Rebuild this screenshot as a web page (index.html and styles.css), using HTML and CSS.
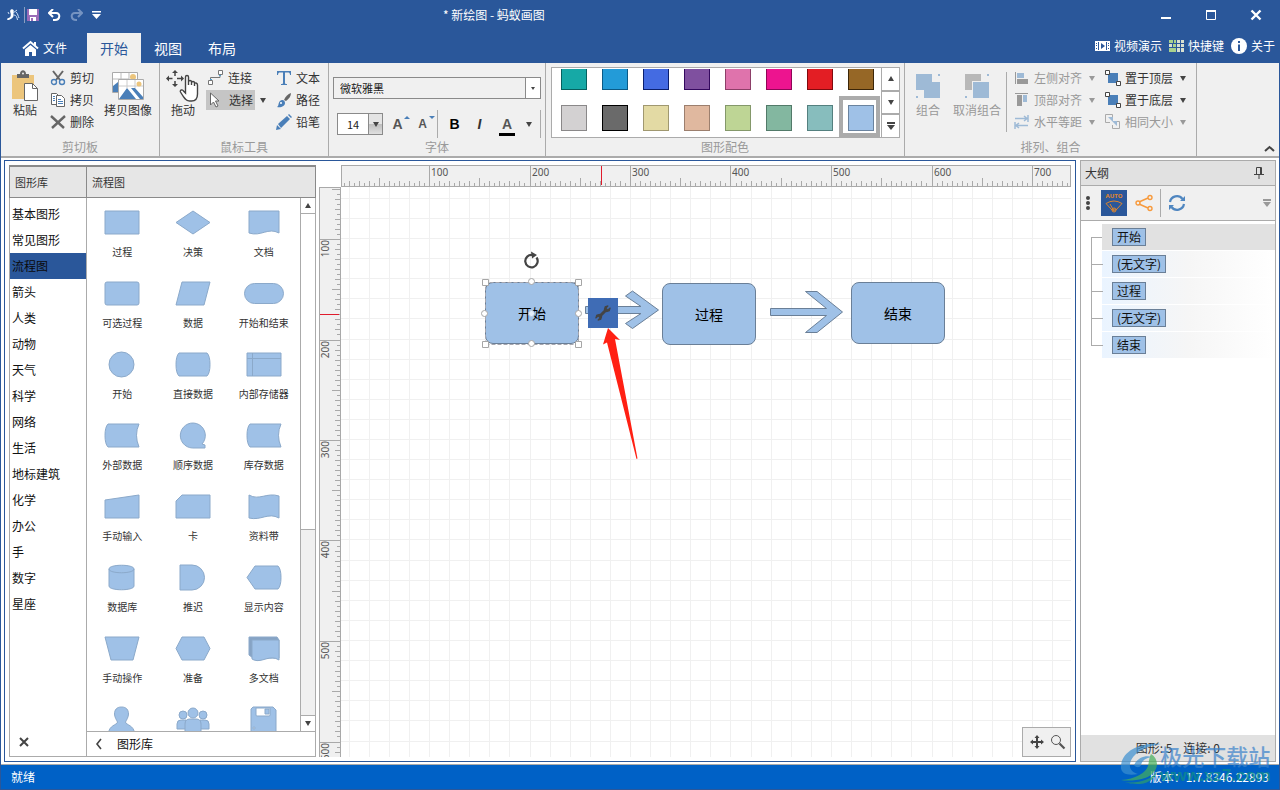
FILE: index.html
```html
<!DOCTYPE html>
<html lang="zh-CN">
<head>
<meta charset="utf-8">
<title>新绘图 - 蚂蚁画图</title>
<link rel="stylesheet" href="styles.css">
</head>
<body>
<div class="window">
  <header class="titlebar">
    <div class="quick">
      <svg class="app-logo" width="14" height="14" viewBox="0 0 14 14"><path d="M5 1.500c2-1 3.500 1 2.500 2.500C7 5 8 6 7.500 8 7 10 4 12 1.500 12c-1-1 0-2 1-2C5 9.500 5 7 4.500 5 4 3.500 4 2 5 1.500z" fill="#fff"/><path d="M7 5l4-3M8 7c2 0 3 2 3.500 5M10 4c2 2 2 4 3 6M3 6L2 4" fill="none" stroke="#cfe0f5"/></svg>
      <i class="quick-sep"></i>
      <button aria-label="保存"><svg width="12" height="12" viewBox="0 0 12 12"><path d="M0 0h12v12H0z" fill="#9a6bb8"/><path d="M2 0h8v6H2zM3 8h6v4H3z" fill="#fff"/><path d="M4 9h2v3H4z" fill="#9a6bb8"/></svg></button>
      <button aria-label="撤销"><svg width="13" height="12" viewBox="0 0 13 12" fill="none" stroke="#fff" stroke-width="2"><path d="M2 4h6c5 0 4 7-1 7H5M5 0L1 4l4 4"/></svg></button>
      <button aria-label="重做"><svg width="13" height="12" viewBox="0 0 13 12" fill="none" stroke="#7593c1" stroke-width="2"><path d="M11 4H5c-5 0-4 7 1 7h1M8 0l4 4-4 4"/></svg></button>
      <button aria-label="自定义"><svg width="9" height="9" viewBox="0 0 9 9" fill="#fff"><path d="M0 0h9v1.500H0zM0 3h9L4.500 8z"/></svg></button>
    </div>
    <h1>* 新绘图 - 蚂蚁画图</h1>
    <div class="winbtns">
      <button aria-label="最小化"><svg width="12" height="12"><path d="M1 8h10v2H1z" fill="#fff"/></svg></button>
      <button aria-label="最大化"><svg width="12" height="12"><path d="M1.500 2h9v8.500h-9z" fill="none" stroke="#fff"/><path d="M1 1h10v2H1z" fill="#fff"/></svg></button>
      <button aria-label="关闭"><svg width="12" height="12"><path d="M1.500 1.500l9 9M10.500 1.500l-9 9" stroke="#fff" stroke-width="2.400"/></svg></button>
    </div>
  </header>

  <nav class="tabs">
    <button class="file"><svg width="17" height="16" viewBox="0 0 17 16"><path d="M1 8.500L8.500 2 16 8.500M13 2v4" fill="none" stroke="#fff" stroke-width="2"/><path d="M3 9.500L8.500 5l5.500 4.500V16h-4v-4H7v4H3z" fill="#fff"/></svg>文件</button>
    <button class="tab on">开始</button>
    <button class="tab">视图</button>
    <button class="tab">布局</button>
    <div class="help">
      <a href="#"><svg width="15" height="12" viewBox="0 0 15 12"><path d="M0 1h15v10H0z" fill="#fff"/><path d="M3 2h1v8H3zM11 2h1v8h-1zM1 3h1v1H1zM1 5h1v1H1zM1 8h1v1H1zM13 3h1v1h-1zM13 5h1v1h-1zM13 8h1v1h-1zM6 3l4 3-4 3z" fill="#2a579a"/></svg>视频演示</a>
      <a href="#"><svg width="15" height="12" viewBox="0 0 15 12"><path d="M0 0h4v3H0zM5 0h2v3H5zM0 8h7v4H0zM4 4h3v3H4z" fill="#a9d18e"/><path d="M8 0h3v3H8zM12 0h3v3h-3zM0 4h3v3H0zM8 4h3v3H8zM12 4h3v3h-3zM8 8h3v4H8zM12 8h3v4h-3z" fill="#d8e0d0"/></svg>快捷键</a>
      <a href="#"><svg width="16" height="16" viewBox="0 0 16 16"><circle cx="8" cy="8" r="8" fill="#fff"/><path d="M7 3h2v2H7zM7 6.500h2V13H7z" fill="#2a579a"/></svg>关于</a>
    </div>
  </nav>

  <section class="ribbon">
    <div class="group g-clip">
      <div class="group-body">
        <button class="big"><svg width="28" height="32" viewBox="0 0 28 32"><path d="M1 5h22v24H1z" fill="#ecc57c"/><path d="M6 8V4h3c0-5 6-5 6 0h3v4z" fill="#666"/><circle cx="12" cy="3.500" r="1" fill="#f0f0f0"/><path d="M13.500 13.500h8l5 5v12h-13z" fill="#fff" stroke="#666"/><path d="M21.500 13.500v5h5" fill="none" stroke="#666"/></svg>粘贴</button>
        <div class="col">
          <button class="row"><svg width="16" height="16" viewBox="0 0 16 16" fill="none"><path d="M3 1l7 9M13 1L6 10" stroke="#666" stroke-width="2"/><circle cx="4" cy="12" r="2.500" stroke="#4a7fb8" stroke-width="1.400"/><circle cx="12" cy="12" r="2.500" stroke="#4a7fb8" stroke-width="1.400"/></svg>剪切</button>
          <button class="row"><svg width="16" height="16" viewBox="0 0 16 16" fill="#fff" stroke="#666"><path d="M1.500 1.500h5l3 3v8h-8z"/><path d="M6.500 3.500h5l3 3v8h-8z"/><path d="M3 4.500h2M3 6.500h2M3 8.500h2M8 7.500h3M8 9.500h5M8 11.500h5" stroke="#4a7fb8"/></svg>拷贝</button>
          <button class="row"><svg width="16" height="16" viewBox="0 0 16 16"><path d="M1 2l13 12M15 2L2 14" stroke="#666" stroke-width="2.400"/></svg>删除</button>
        </div>
        <button class="big w-copy"><svg width="34" height="32" viewBox="0 0 34 32"><path d="M1.500 2.500h25v20h-25z" fill="#fff" stroke="#aaa"/><path d="M10 3v10M18 3v6M2 9h16" stroke="#bbb"/><circle cx="22" cy="7" r="3" fill="#ecc57c"/><path d="M2 22v-6l5-4v10z" fill="#4a7fb8"/><path d="M7.500 9.500h25v20h-25z" fill="#fff" stroke="#aaa"/><path d="M16 10v8M24 10v8M8 16h24" stroke="#ccc"/><circle cx="28" cy="14" r="2.500" fill="#ecc57c"/><path d="M8 29l8-11 9 11zM20 18h4l8 9v2h-3z" fill="#4a7fb8"/></svg>拷贝图像</button>
      </div>
      <div class="group-name">剪切板</div>
    </div>

    <div class="group g-mouse">
      <div class="group-body">
        <button class="big"><svg width="34" height="32" viewBox="0 0 34 32" fill="none" stroke="#444"><path d="M9 2v4M9 11v4M2.500 8.500h4M11 8.500h4" stroke-width="1.500"/><path d="M9 0l3 3H6zM9 17l3-3H6zM0 8.500l3-3v6zM18 8.500l-3-3v6z" fill="#444" stroke="none"/><path d="M19.500 19V7c0-2 3-2 3 0v8-3c0-2 3-2 3 0v3-2c0-2 3-2 3 0v3-2c0-2 3-1 3 1v9c0 4-2 7-6 7h-2c-4 0-6-4-9-9-1-2 2-3 3-1l2 2z" fill="#fff" stroke-width="1.400"/></svg>拖动</button>
        <div class="col">
          <button class="row"><svg width="16" height="16" viewBox="0 0 16 16" fill="none"><path d="M2.500 10V7.500H12V5" stroke="#777"/><path d="M.5 10.500h4v4h-4zM10.500.5h4v4h-4z" fill="#fff" stroke="#777"/><path d="M2 9h2v1H2zM11 5h2v1h-2z" fill="#4a9fd0"/></svg>连接</button>
          <div class="split"><button class="row pressed"><svg width="16" height="16" viewBox="0 0 16 16"><path d="M3.500 1v12l3-3 2.500 5 2-1-2.500-5H12z" fill="#fff" stroke="#666"/></svg>选择</button><button class="caret-btn" aria-label="选择方式"><i class="caret"></i></button></div>
        </div>
        <div class="col">
          <button class="row"><svg width="16" height="16" viewBox="0 0 16 16" fill="#4a7fb8"><path d="M1 1h14v4h-1c0-2-1-2.500-2-2.500H9V13c0 1 1 1 2 1v1H5v-1c1 0 2 0 2-1V2.500H4C3 2.500 2 3 2 5H1z"/></svg>文本</button>
          <button class="row"><svg width="16" height="16" viewBox="0 0 16 16"><path d="M15 1c-3 1-6 4-7 7l2 1c3-2 5-5 5-8z" fill="#666"/><path d="M1 15c2-1 1-4 3-6s5-1 5 2c0 3-4 5-8 4z" fill="#4a7fb8"/><circle cx="5" cy="11" r="1" fill="#fff"/></svg>路径</button>
          <button class="row"><svg width="16" height="16" viewBox="0 0 16 16"><path d="M0 16l1-5 4 4zM2 10l9-8 3 3-9 9zM12 1l1-1 3 3-1 1z" fill="#4a7fb8"/></svg>铅笔</button>
        </div>
      </div>
      <div class="group-name">鼠标工具</div>
    </div>

    <div class="group g-font">
      <div class="group-body">
        <div class="combo family"><select aria-label="字体"><option>微软雅黑</option></select><span class="combo-arrow"><i class="caret tiny"></i></span></div>
        <div class="font-row">
          <div class="combo size"><select aria-label="字号"><option>14</option></select><span class="combo-arrow"><i class="caret"></i></span></div>
          <button class="ic up" aria-label="增大字号">A<i></i></button>
          <button class="ic down" aria-label="减小字号">A<i></i></button>
          <i class="vsep"></i>
          <button class="ic bold">B</button>
          <button class="ic italic">I</button>
          <button class="ic color">A</button>
          <button class="caret-btn" aria-label="字体颜色"><i class="caret"></i></button>
          <i class="vsep"></i>
        </div>
      </div>
      <div class="group-name">字体</div>
    </div>

    <div class="group g-color">
      <div class="group-body">
        <div class="gallery">
          <button class="sw c1" aria-label="青绿"></button><button class="sw c2" aria-label="天蓝"></button><button class="sw c3" aria-label="蓝"></button><button class="sw c4" aria-label="紫"></button><button class="sw c5" aria-label="粉"></button><button class="sw c6" aria-label="洋红"></button><button class="sw c7" aria-label="红"></button><button class="sw c8" aria-label="棕"></button>
          <button class="sw d1" aria-label="浅灰"></button><button class="sw d2" aria-label="深灰"></button><button class="sw d3" aria-label="米黄"></button><button class="sw d4" aria-label="肤色"></button><button class="sw d5" aria-label="浅绿"></button><button class="sw d6" aria-label="墨绿"></button><button class="sw d7" aria-label="灰青"></button><button class="sw d8 chosen" aria-label="浅蓝"></button>
        </div>
        <div class="gallery-nav">
          <button aria-label="上一行"><i class="caret rise"></i></button>
          <button aria-label="下一行"><i class="caret"></i></button>
          <button aria-label="全部配色"><i class="caret bar"></i></button>
        </div>
      </div>
      <div class="group-name">图形配色</div>
    </div>

    <div class="group g-arrange">
      <div class="group-body">
        <button class="big off"><svg width="26" height="32" viewBox="0 0 26 32" fill="#9ebad6"><path d="M1 4h16v8h8v16H9v-8H1zM23 4h2v2h-2zM1 26h2v2H1z"/></svg>组合</button>
        <button class="big off w-copy"><svg width="26" height="32" viewBox="0 0 26 32" fill="#9ebad6"><path d="M1 4h16v7H8v9H1z" fill="#b8b8b8"/><path d="M9 12h16v16H9zM23 4h2v2h-2zM1 26h2v2H1z"/></svg>取消组合</button>
        <i class="vsep tall"></i>
        <div class="col">
          <button class="row off"><svg width="16" height="16" viewBox="0 0 16 16"><path d="M1 2h1v12H1zM3 9h11v5H3z" fill="#999"/><path d="M3 3h7v5H3z" fill="#9ebad6"/></svg>左侧对齐<i class="caret"></i></button>
          <button class="row off"><svg width="16" height="16" viewBox="0 0 16 16"><path d="M1 1h13v1H1zM3 3h5v11H3z" fill="#999"/><path d="M9 3h4v7H9z" fill="#9ebad6"/></svg>顶部对齐<i class="caret"></i></button>
          <button class="row off"><svg width="16" height="16" viewBox="0 0 16 16" fill="none" stroke="#9ebad6" stroke-width="1.500"><path d="M1 4.500h12M10 2l3 2.500L10 7M14 1v7M14 11.500H2M5 9l-3 2.500L5 14M1 8v7"/></svg>水平等距<i class="caret"></i></button>
        </div>
        <div class="col second">
          <button class="row"><svg width="16" height="16" viewBox="0 0 16 16"><path d="M3 3h10v10H3z" fill="#4a7fb8"/><path d="M.5.5h4v4h-4zM11.500 11.500h4v4h-4z" fill="#fff" stroke="#444"/></svg>置于顶层<i class="caret"></i></button>
          <button class="row"><svg width="16" height="16" viewBox="0 0 16 16"><path d="M3 3h10v10H3z" fill="#4a7fb8"/><path d="M.5.5h4v4h-4zM11.500 11.500h4v4h-4z" fill="#fff" stroke="#444"/></svg>置于底层<i class="caret"></i></button>
          <button class="row off"><svg width="16" height="16" viewBox="0 0 16 16"><path d="M5 8.500H.5v-8h7V5M9 7.500h5.500v7h-7V11" fill="none" stroke="#aaa"/><path d="M3 3h5v5zM7 7h5v5z" fill="#9ebad6"/></svg>相同大小<i class="caret"></i></button>
        </div>
      </div>
      <div class="group-name">排列、组合</div>
    </div>
    <button class="fold" aria-label="折叠功能区"><svg width="11" height="7" viewBox="0 0 11 7"><path d="M1 6l4.500-4L10 6" fill="none" stroke="#444" stroke-width="2"/></svg></button>
  </section>

  <main class="work">
    <section class="document">
      <aside class="library">
        <div class="lib-head"><span>图形库</span><span>流程图</span></div>
        <div class="lib-main">
          <div class="cats">
            <ul>
              <li><button>基本图形</button></li><li><button>常见图形</button></li><li><button class="on">流程图</button></li><li><button>箭头</button></li><li><button>人类</button></li><li><button>动物</button></li><li><button>天气</button></li><li><button>科学</button></li><li><button>网络</button></li><li><button>生活</button></li><li><button>地标建筑</button></li><li><button>化学</button></li><li><button>办公</button></li><li><button>手</button></li><li><button>数字</button></li><li><button>星座</button></li>
            </ul>
            <button class="lib-close" aria-label="关闭图形库"><svg width="12" height="12"><path d="M2 2l8 8M10 2l-8 8" stroke="#444" stroke-width="2"/></svg></button>
          </div>
          <div class="shapes">
            <div class="shape-scroll">
              <div class="shape-grid">
                <figure><svg viewBox="0 0 40 40"><path d="M3 8h34v23H3z"/></svg><figcaption>过程</figcaption></figure>
                <figure><svg viewBox="0 0 40 40"><path d="M20 8l17 11.500L20 31 3 19.500z"/></svg><figcaption>决策</figcaption></figure>
                <figure><svg viewBox="0 0 40 40"><path d="M5 8h30v22c-11-6-18 4-30 0z"/></svg><figcaption>文档</figcaption></figure>
                <figure><svg viewBox="0 0 40 40"><rect x="3" y="8" width="34" height="23" rx="2"/></svg><figcaption>可选过程</figcaption></figure>
                <figure><svg viewBox="0 0 40 40"><path d="M9 8h28l-6 23H3z"/></svg><figcaption>数据</figcaption></figure>
                <figure><svg viewBox="0 0 40 40"><rect x=".5" y="9.500" width="39" height="20" rx="10"/></svg><figcaption>开始和结束</figcaption></figure>
                <figure><svg viewBox="0 0 40 40"><circle cx="19.500" cy="19.500" r="12.500"/></svg><figcaption>开始</figcaption></figure>
                <figure><svg viewBox="0 0 40 40"><path d="M6 8h28q3 3 3 11.500T34 31H6q-3-3-3-11.500T6 8z"/></svg><figcaption>直接数据</figcaption></figure>
                <figure><svg viewBox="0 0 40 40"><path d="M3 8h34v23H3zM8.500 8v23M3 13.500h34"/></svg><figcaption>内部存储器</figcaption></figure>
                <figure><svg viewBox="0 0 40 40"><path d="M6 8h31q-5 11 0 23H6q-3-3-3-11.500T6 8z"/></svg><figcaption>外部数据</figcaption></figure>
                <figure><svg viewBox="0 0 40 40"><path d="M32 32H19.500A12.500 12.500 0 1 1 29 28l3 1z"/></svg><figcaption>顺序数据</figcaption></figure>
                <figure><svg viewBox="0 0 40 40"><path d="M6 8h31q-5 11 0 23H6q-3-3-3-11.500T6 8z"/></svg><figcaption>库存数据</figcaption></figure>
                <figure><svg viewBox="0 0 40 40"><path d="M3 13l34-5v23H3z"/></svg><figcaption>手动输入</figcaption></figure>
                <figure><svg viewBox="0 0 40 40"><path d="M9 8h28v23H3V14z"/></svg><figcaption>卡</figcaption></figure>
                <figure><svg viewBox="0 0 40 40"><path d="M5 8c10 6 18-3 30 1v22c-11-6-18 3-30 0z"/></svg><figcaption>资料带</figcaption></figure>
                <figure><svg viewBox="0 0 40 40"><path d="M7 11v17c0 5 25 5 25 0V11c0-5-25-5-25 0c0 5 25 5 25 0"/></svg><figcaption>数据库</figcaption></figure>
                <figure><svg viewBox="0 0 40 40"><path d="M7 7h12a12.500 12.500 0 0 1 0 25H7z"/></svg><figcaption>推迟</figcaption></figure>
                <figure><svg viewBox="0 0 40 40"><path d="M11 8h23q3 3 3 11.500T34 31H11L3 19.500z"/></svg><figcaption>显示内容</figcaption></figure>
                <figure><svg viewBox="0 0 40 40"><path d="M3 8h34l-6 23H9z"/></svg><figcaption>手动操作</figcaption></figure>
                <figure><svg viewBox="0 0 40 40"><path d="M9 8h22l6 11.500L31 31H9L3 19.500z"/></svg><figcaption>准备</figcaption></figure>
                <figure><svg viewBox="0 0 40 40"><path class="dim" d="M5 8h28l2 3v18H9l-4-3z"/><path d="M8 11h27v20c-9-6-17 3-25 0l-2-1z"/></svg><figcaption>多文档</figcaption></figure>
                <figure><svg viewBox="0 0 40 40"><path d="M19.500 7c5 0 7 3 7 7 0 3-2 6-3 8 0 3 9 3 9 12h-26c0-9 9-9 9-12-1-2-3-5-3-8 0-4 2-7 7-7z"/></svg></figure>
                <figure><svg viewBox="0 0 40 40"><circle cx="10" cy="15" r="4"/><circle cx="30" cy="15" r="4"/><path d="M4 29v-5q0-4 4-4h5v9zM27 29v-9h5q4 0 4 4v5z"/><path d="M12 34V24q0-5 5-5h6q5 0 5 5v10z"/><circle cx="20" cy="13" r="5"/></svg></figure>
                <figure><svg viewBox="0 0 40 40"><path d="M9 7h20l3 3v24H7V9z"/><path class="paper" d="M12 8h14v7q0 1-1 1H13q-1 0-1-1z"/><path d="M21 9h4v5h-4z"/><circle class="paper" cx="10" cy="28" r="1"/></svg></figure>
              </div>
              <div class="scrollbar">
                <button aria-label="向上滚动"><i class="caret rise"></i></button>
                <div class="track"><div class="thumb"></div></div>
                <button aria-label="向下滚动"><i class="caret"></i></button>
              </div>
            </div>
            <div class="lib-foot"><button><svg width="8" height="12" viewBox="0 0 8 12"><path d="M6 1L2 6l4 5" fill="none" stroke="#444" stroke-width="1.600"/></svg>图形库</button></div>
          </div>
        </div>
      </aside>

      <div class="editor">
        <svg class="ruler-h" id="ruler-h"></svg>
        <svg class="ruler-v" id="ruler-v"></svg>
        <div class="canvas">
          <svg class="layer" id="grid"></svg>
          <div class="node n1">开始</div>
          <div class="node n2">过程</div>
          <div class="node n3">结束</div>
          <svg class="layer" viewBox="341 187 730 570" width="730" height="570">
            <g fill="#9fc1e7" stroke="#6a7f97">
              <path d="M585.500 306.500H641L625.500 296l7-5 26 19-26 18.500-7-5 15.500-10h-55.500z"/>
              <path d="M770.500 308.500h56l-21-17H817l25.500 20.500-25.500 20.500h-11.500l21-17h-56z"/>
            </g>
            <path d="M485.500 344.500h93v-62h-93z" fill="none" stroke="#a6a6ae" stroke-dasharray="4 2"/>
            <g fill="#fff" stroke="#a6a6a6">
              <path d="M482.500 279.500h6v6h-6zM575.500 279.500h6v6h-6zM482.500 341.500h6v6h-6zM575.500 341.500h6v6h-6z"/>
              <circle cx="531.500" cy="281.500" r="3"/><circle cx="531.500" cy="343.500" r="3"/><circle cx="484.500" cy="313.500" r="3"/><circle cx="578.500" cy="313.500" r="3"/><circle cx="531.500" cy="313.500" r="3" fill="#e4edf8" stroke="#b6c8dc"/>
            </g>
            <path d="M536.500 257.500a6.200 6.200 0 1 1-4-2.500" fill="none" stroke="#444" stroke-width="2.200"/><path d="M531 251.500l6 3.500-5 3.500z" fill="#444"/>
            <path d="M588 298h30v30h-30z" fill="#3f6cb5"/>
            <g transform="translate(603 313) rotate(-45)" fill="#444"><path d="M-5-1.500H5v3H-5z"/><path d="M-9-2l3-1.500 3 1.500v4l-3 1.500L-9 2l0-1 3-.2v-1.600l-3-.2zM9-2L6-3.500 3-2v4l3 1.500L9 2V1L6 .8V-.8L9-1z"/></g>
            <path d="M608 328l12 12-5-1 22.500 119.500-1 .5-29.500-116.500-4 2z" fill="#ff2013"/>
          </svg>
          <div class="zoombox">
            <button aria-label="移动"><svg width="14" height="14" viewBox="0 0 14 14" fill="#444"><path d="M6 2h2v10H6zM2 6h10v2H2z"/><path d="M7 0l2.500 3h-5zM7 14l2.500-3h-5zM0 7l3-2.500v5zM14 7l-3-2.500v5z"/></svg></button>
            <button aria-label="缩放"><svg width="16" height="16" viewBox="0 0 16 16" fill="none" stroke="#555"><circle cx="6" cy="6" r="4.500"/><path d="M9.500 9.500l5 5" stroke-width="2.200"/></svg></button>
          </div>
        </div>
      </div>
    </section>

    <aside class="outline">
      <div class="out-head">大纲<button aria-label="固定"><svg width="10" height="12" viewBox="0 0 10 12"><path d="M2.500 7V.5h5V7M0 7.500h10M5 8v4" fill="none" stroke="#444"/><path d="M6 1h1v6H6z" fill="#444"/></svg></button></div>
      <div class="out-tools">
        <svg width="6" height="16" viewBox="0 0 6 16" fill="#444"><circle cx="3" cy="3" r="2"/><circle cx="3" cy="8" r="2"/><circle cx="3" cy="13" r="2"/></svg>
        <button class="auto" aria-label="自动排版"><span>AUTO</span><svg width="18" height="13" viewBox="0 0 18 13" fill="none" stroke="#e0862c"><path d="M1 3.500Q9-1.500 17 3.500L11 10H7zM9 11L5 4"/><circle cx="9" cy="10" r="2"/></svg></button>
        <button aria-label="连接布局"><svg width="18" height="18" viewBox="0 0 18 18" fill="none" stroke="#f79a3c" stroke-width="1.400"><path d="M4 8l9-4M4 10l9 4"/><circle cx="3" cy="9" r="2"/><circle cx="15" cy="3.500" r="2"/><circle cx="15" cy="14.500" r="2"/></svg></button>
        <i class="vsep"></i>
        <button aria-label="刷新"><svg width="18" height="18" viewBox="0 0 18 18" fill="none" stroke="#4f86c0" stroke-width="2.200"><path d="M2 8a7 7 0 0 1 12.500-3M16 10a7 7 0 0 1-12.500 3"/><path d="M17 2v5h-5zM1 16v-5h5z" fill="#4f86c0" stroke="none"/></svg></button>
        <button class="more" aria-label="更多"><i class="caret bar"></i></button>
      </div>
      <ul class="tree">
        <li class="on"><button>开始</button></li>
        <li><button>(无文字)</button></li>
        <li><button>过程</button></li>
        <li><button>(无文字)</button></li>
        <li><button>结束</button></li>
      </ul>
      <div class="out-foot"><span>图形: 5</span><span>连接: 0</span></div>
    </aside>
  </main>

  <footer class="status"><span>就绪</span><span>版本：1.7.8346.22893</span></footer>

  <div class="brand">
    <svg width="46" height="42" viewBox="0 0 46 42"><path d="M3 24C4 9 22 0 43 2 28 4 14 11 12 22c-1 5 3 9 8 10C10 34 2 32 3 24z" fill="#3b8fd0"/><path d="M16 23c4-8 12-10 18-8-7 1-10 4-11 8-1 3-5 3-7 0z" fill="#3b8fd0"/><path d="M33 12c10 6 7 20-6 24-9 3-19 3-24 2 14-1 25-7 27-14 1-4 1-8 3-12z" fill="#45b05a"/><path d="M6 40c13 2 28-2 33-11-1 6-7 12-17 13-7 0-13-1-16-2z" fill="#2f9f6a"/></svg>
    <div><strong>极光下载站</strong><em>www.xz7.com</em></div>
  </div>
</div>
<script src="rulers.js"></script>
</body>
</html>
```
FILE: styles.css
```css
* { box-sizing: border-box; }
body { margin: 0; font: 12px/16px "Noto Sans CJK SC", "Noto Sans", sans-serif; color: #333; }
button { font: inherit; color: inherit; background: none; border: 0; padding: 0; margin: 0; }
ul { list-style: none; margin: 0; padding: 0; }
svg { display: block; flex: none; }
a { color: inherit; text-decoration: none; }
.window { position: relative; display: flex; flex-direction: column; height: 100vh; background: #2a579a; overflow: hidden; }

.titlebar { display: flex; align-items: center; height: 33px; padding-bottom: 3px; color: #fff; }
.quick { display: flex; align-items: center; gap: 9px; padding-left: 6px; width: 443px; }
.quick-sep { width: 1px; height: 16px; background: #8a9fc2; margin: 0 -7px 0 -5px; }
.titlebar h1 { flex: 1; margin: 0; font-size: 12px; font-weight: 400; }
.winbtns { display: flex; margin-right: 2px; }
.winbtns button { width: 45px; height: 30px; display: grid; place-items: center; }

.tabs { display: flex; height: 30px; padding: 0 5px 0 22px; color: #fff; }
.file { display: flex; align-items: center; gap: 4px; width: 65px; }
.tab { width: 54px; font-size: 14px; }
.tab.on { background: #f0f0f0; color: #2a579a; }
.help { margin-left: auto; display: flex; gap: 7px; align-items: center; padding-bottom: 4px; }
.help a { display: flex; align-items: center; gap: 4px; }

.ribbon { display: flex; margin: 0 1px; background: #f0f0f0; border-bottom: 2px solid #ababab; }
.group { display: flex; flex-direction: column; border-right: 1px solid #ababab; }
.group-body { display: flex; height: 76px; }
.group-name { text-align: center; height: 17px; color: #999; }
.g-clip { width: 159px; }
.g-mouse { width: 169px; }
.g-font { width: 217px; }
.g-color { width: 359px; }
.g-arrange { width: 292px; }
.big { display: flex; flex-direction: column; align-items: center; padding-top: 7px; width: 48px; white-space: nowrap; }
.w-copy { width: 50px; }
.g-clip .w-copy { width: 54px; margin-left: 6px; }
.g-mouse .big { width: 46px; }
.g-arrange .big { width: 46px; }
.g-arrange .w-copy { width: 52px; }
.col { padding-top: 4px; }
.row { display: flex; align-items: center; gap: 4px; height: 22px; padding: 0 1px; white-space: nowrap; }
.g-mouse .row { padding: 0 2px; }
.split { display: flex; align-items: center; height: 22px; }
.g-mouse .pressed { background: #c5c5c5; height: 20px; width: 49px; padding-left: 1px; gap: 6px; }
.g-mouse .col + .col { margin-left: 3px; }
.caret-btn { display: grid; place-items: center; width: 16px; height: 20px; }
.off { color: #999; }
.off .caret { border-top-color: #999; }
.row .caret { margin-left: 3px; }
.g-arrange .row { padding: 0 5px 0 2px; gap: 4px; }
.g-arrange .second { margin-left: 3px; }
.caret { display: block; width: 0; height: 0; border: 3px solid transparent; border-top: 5px solid #444; border-bottom: 0; }
.caret.rise { border-top: 0; border-bottom: 5px solid #444; }
.caret.tiny { border-width: 3px 2px 0; }
.caret.bar { position: relative; border-width: 5px 4px 0; margin-top: 3px; }
.caret.bar::before { content: ""; position: absolute; left: -4px; top: -8px; width: 8px; height: 2px; background: #444; }

.g-font .group-body { flex-direction: column; padding: 14px 4px 0; }
.combo { position: relative; display: flex; height: 22px; border: 1px solid #8a8a8a; }
.combo select { flex: 1; width: 100%; appearance: none; border: 0; background: #f0f0f0; font: 11px/18px "Noto Sans CJK SC", sans-serif; color: #222; padding: 0 6px; }
.combo-arrow { position: absolute; right: 0; top: 0; bottom: 0; width: 15px; display: grid; place-items: center; border-left: 1px solid #8a8a8a; background: #fff; pointer-events: none; }
.font-row { display: flex; align-items: center; height: 30px; margin-top: 10px; padding-left: 4px; }
.size { width: 46px; }
.size select { background: #fff; padding: 0 9px; }
.size .combo-arrow { width: 14px; background: linear-gradient(#e4e4e4 50%, #bdbdbd 50%, #e0e0e0); }
.ic { position: relative; width: 25px; height: 24px; font: 700 14px/24px "Liberation Sans", sans-serif; color: #555; }
.ic.up { margin-left: 4px; }
.ic.down { font-size: 12px; }
.ic.up, .ic.down { padding-right: 4px; }
.ic i { position: absolute; right: 2px; top: 4px; border: 3px solid transparent; border-bottom: 3px solid #4a7fb8; border-top: 0; }
.ic.down i { border-top: 3px solid #4a7fb8; border-bottom: 0; }
.ic.bold { color: #000; margin-left: 4px; }
.ic.italic { font-style: italic; color: #333; }
.ic.color { margin: 0 2px 0 3px; width: 24px; }
.ic.color::after { content: ""; position: absolute; left: 4px; right: 4px; bottom: 0; height: 3px; background: #000; }
.vsep { width: 1px; height: 28px; background: #ababab; }
.font-row .vsep:last-child { margin-left: 3px; }
.vsep.tall { height: 60px; margin: 9px 5px 0 3px; }

.g-color .group-body { padding: 4px 4px 0 5px; }
.gallery { flex: 1; display: grid; grid-template-columns: repeat(8, 41px); grid-auto-rows: 41px; align-content: end; height: 71px; padding-top: 1px; overflow: clip; overflow-clip-margin: content-box; background: #fff; border: 1px solid #ababab; }
.sw { padding: 9px; border: 0 solid #ababab; }
.sw::before { content: ""; display: block; width: 24px; height: 24px; background: var(--fill); border: 1px solid var(--edge); }
.sw.chosen { padding: 5px; border-width: 4px; }
.c1 { --fill: #16a9a6; --edge: #06605e; }
.c2 { --fill: #239bd8; --edge: #0b5a86; }
.c3 { --fill: #446be2; --edge: #0a1f6e; }
.c4 { --fill: #7f509f; --edge: #33085e; }
.c5 { --fill: #df73ac; --edge: #8c3f68; }
.c6 { --fill: #ed148f; --edge: #8f0556; }
.c7 { --fill: #e31e24; --edge: #800a0e; }
.c8 { --fill: #966726; --edge: #3c2608; }
.d1 { --fill: #d3d1d2; --edge: #8a8889; }
.d2 { --fill: #6a6a6a; --edge: #000; }
.d3 { --fill: #e3daa4; --edge: #a09870; }
.d4 { --fill: #e0b89f; --edge: #9c7f6e; }
.d5 { --fill: #bed595; --edge: #84986a; }
.d6 { --fill: #83b7a0; --edge: #527a69; }
.d7 { --fill: #87bdbd; --edge: #54807f; }
.d8 { --fill: #9fc1e7; --edge: #6a839f; }
.gallery-nav { display: flex; flex-direction: column; width: 18px; height: 71px; }
.gallery-nav button { flex: 1; display: grid; place-items: center; background: #fff; border: 1px solid #ababab; border-left-width: 0; }
.fold { align-self: flex-end; margin: 0 4px 4px auto; }

.work { flex: 1; min-height: 0; display: flex; gap: 4px; margin: 0 1px; padding: 2px 3px 2px; background: #fff; border-bottom: 1px solid #ababab; }
.document { flex: 1; min-width: 0; display: flex; gap: 3px; padding: 4px 4px 4px; border: 1px solid #2a579a; }
.library { width: 307px; display: flex; flex-direction: column; border: 1px solid #ababab; }
.lib-head { display: grid; grid-template-columns: 76px 1fr; height: 33px; margin: -1px -1px 0; border: 1px solid #8a8a8a; border-top-width: 2px; background: #e6e6e6; font-size: 11px; line-height: 30px; }
.lib-head span { padding-left: 5px; }
.lib-head span + span { border-left: 1px solid #8a8a8a; padding-left: 5px; }
.lib-main { flex: 1; min-height: 0; display: grid; grid-template-columns: 77px 1fr; }
.cats { display: flex; flex-direction: column; justify-content: space-between; border-right: 1px solid #ababab; padding-top: 3px; color: #111; }
.cats li button { display: block; width: 100%; height: 26px; text-align: left; padding-left: 2px; }
.cats li .on { background: #2a579a; color: #0a0a0a; }
.lib-close { align-self: flex-start; margin: 0 0 8px 8px; }
.shapes { display: flex; flex-direction: column; min-height: 0; }
.shape-scroll { flex: 1; min-height: 0; display: flex; overflow: hidden; }
.shape-grid { flex: 1; display: grid; grid-template-columns: repeat(3, 1fr); grid-auto-rows: 71px; padding: 5px 1px 0 0; }
figure { margin: 0; display: flex; flex-direction: column; align-items: center; font-size: 10px; line-height: 16px; gap: 1px; }
figure svg { width: 40px; height: 40px; fill: #9fc1e7; stroke: #8ba9ca; }
figure .dim { fill: #86a3c4; }
figure .paper { fill: #fff; }
.scrollbar { width: 15px; display: flex; flex-direction: column; background: #f0f0f0; border-left: 1px solid #ababab; }
.scrollbar button { height: 16px; display: grid; place-items: center; background: #fff; border-bottom: 1px solid #ababab; }
.scrollbar button:last-child { border-bottom: 0; border-top: 1px solid #ababab; }
.track { flex: 1; }
.thumb { height: 63%; background: #fff; border-bottom: 1px solid #ababab; }
.lib-foot { display: flex; height: 25px; border-top: 1px solid #ababab; padding-left: 8px; color: #111; }
.lib-foot button { display: flex; align-items: center; gap: 14px; }

.editor { flex: 1; min-width: 0; display: grid; grid-template: 22px 1fr / 22px 1fr; }
.ruler-h { grid-column: 2; width: 100%; height: 22px; background: #f0f0f0; border: 1px solid #a9a9a9; }
.ruler-v { width: 22px; height: 100%; background: #f0f0f0; border: 1px solid #a9a9a9; border-bottom: 0; }
.ruler-h text, .ruler-v text { font: 10px "Noto Sans", sans-serif; fill: #555; }
.tick { fill: #a9a9a9; }
.mark { fill: #e01b2c; }
.canvas { position: relative; overflow: hidden; }
.layer { position: absolute; left: 0; top: 0; }
#grid { width: 100%; height: 100%; fill: #f0f0f0; }
.node { position: absolute; display: grid; place-items: center; width: 94px; height: 62px; background: #9fc1e7; border: 1px solid #6a7f97; border-radius: 8px; color: #000; font-size: 14px; }
.n1 { left: 144px; top: 95px; }
.n2 { left: 321px; top: 96px; }
.n3 { left: 510px; top: 95px; }
.zoombox { position: absolute; right: 0; bottom: 0; display: flex; align-items: center; gap: 6px; height: 30px; padding: 0 4px 0 7px; background: #f0f0f0; border: 1px solid #ababab; }

.outline { width: 196px; display: flex; flex-direction: column; border: 1px solid #ababab; }
.out-head { display: flex; justify-content: space-between; align-items: center; height: 25px; padding: 0 11px 0 4px; background: #e1e1e1; border-bottom: 1px solid #ababab; }
.out-tools { display: flex; align-items: center; height: 35px; padding: 0 4px; background: #f0f0f0; border-bottom: 1px solid #ababab; }
.auto { display: grid; justify-items: center; align-content: center; width: 26px; height: 26px; margin: 0 8px 0 10px; background: #2a579a; color: #e0862c; }
.auto span { font: 700 6px/7px "Noto Sans", sans-serif; }
.out-tools .vsep { margin: 0 7px; }
.more { margin-left: auto; opacity: .5; }
.tree { flex: 1; margin-left: 10px; padding-top: 3px; }
.tree li { position: relative; height: 26px; margin: 0 0 1px 11px; padding: 4px 10px; background: linear-gradient(90deg, #eaf4ff, #f6f6f6 50%, #fff); }
.tree .on { background: #e1e1e1; }
.tree li::before { content: ""; position: absolute; left: -11px; top: -14px; width: 11px; height: 27px; border-left: 1px solid #ababab; border-bottom: 1px solid #ababab; }
.tree li:first-child::before { top: 12px; height: 1px; border-left: 0; }
.tree button { display: block; height: 18px; padding: 0 4px; background: #9fc1e7; border: 1px solid #6a7f97; line-height: 16px; color: #111; }
.out-foot { display: flex; justify-content: flex-end; gap: 11px; height: 26px; line-height: 26px; padding-right: 55px; background: #e1e1e1; }

.status { display: flex; justify-content: space-between; height: 25px; line-height: 23px; padding: 0 10px; margin: 0 1px; background: #0061c6; border-bottom: 1px solid #2a579a; color: #fff; }
.brand { position: absolute; right: 9px; bottom: 6px; display: flex; pointer-events: none; opacity: .7; }
.brand svg { margin-right: -4px; }
.brand div { display: flex; flex-direction: column; }
.brand strong { font-size: 22px; line-height: 26px; font-weight: 500; color: #3a82cb; }
.brand em { font: 700 17px/16px "Liberation Sans", sans-serif; color: #0e8f86; }
```
FILE: rulers.js
```js
// Scale of the drawing: screen pixels for each ruler unit.
const SCALE = 1.005;

const rulerH = document.getElementById("ruler-h");
const rulerV = document.getElementById("ruler-v");
const grid = document.getElementById("grid");

function rect(x, y, w, h, cls) {
  return `<rect x="${x}" y="${y}" width="${w}" height="${h}" class="${cls}"/>`;
}

// Calls back with each tick's value and its offset, as far as the given end.
function eachTick(hundredAt, end, step, draw) {
  for (let v = 0; ; v += step) {
    const at = Math.round(hundredAt + (v - 100) * SCALE);
    if (at >= end) return;
    if (at > 0) draw(v, at);
  }
}

function tickLength(v) {
  if (v % 100 === 0) return 20;
  if (v % 50 === 0) return 8;
  return v % 10 === 0 ? 5 : 3;
}

function drawAll() {
  const width = rulerH.getBoundingClientRect().width;
  const height = rulerV.getBoundingClientRect().height;

  let h = "";
  eachTick(87, width - 2, 5, (v, x) => {
    const len = tickLength(v);
    h += rect(x, 20 - len, 1, len, "tick");
    if (len === 20) h += `<text x="${x + 2}" y="10">${v}</text>`;
  });
  rulerH.innerHTML = h + rect(259, 0, 1, 19, "mark");

  let s = "";
  eachTick(51, height - 1, 5, (v, y) => {
    const len = tickLength(v);
    s += rect(20 - len, y, len, 1, "tick");
    if (len === 20) s += `<text transform="translate(9 ${y + 1}) rotate(-90)" text-anchor="end">${v}</text>`;
  });
  rulerV.innerHTML = s + rect(0, 126, 19, 1, "mark");

  let g = "";
  eachTick(88, width, 20, (v, x) => { g += rect(x, 0, 1, height, "line"); });
  eachTick(51, height, 20, (v, y) => { g += rect(0, y, width, 1, "line"); });
  grid.innerHTML = g;
}

drawAll();
window.addEventListener("resize", drawAll);
```
